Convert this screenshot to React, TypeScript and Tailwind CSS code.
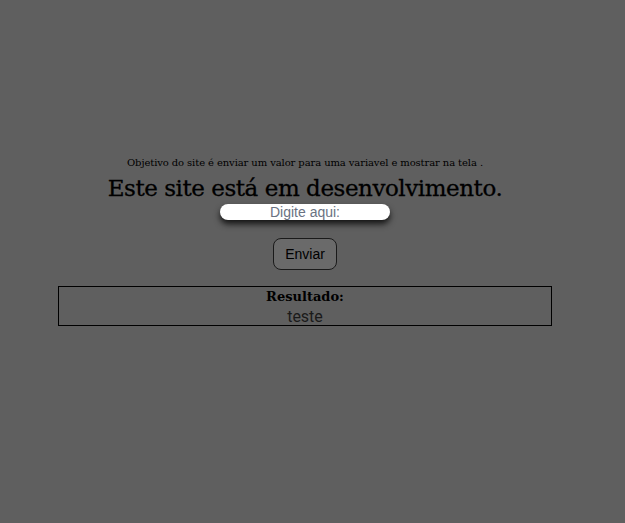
import { useState } from "react";

export default function App() {
  const [valor, setValor] = useState("");
  const [resultado, setResultado] = useState("teste");

  return (
    <div className="min-h-[523px] w-full bg-[#5f5f5f] pr-[15px] pt-[156px] text-black">
      <div className="flex flex-col items-center">
        <p className="font-['DejaVu_Serif',serif] text-[10px] leading-[14px] tracking-[-0.1px]">
          Objetivo do site é enviar um valor para uma variavel e mostrar na tela .
        </p>
        <h1 className="mt-[2px] font-['DejaVu_Serif',serif] text-[23px] leading-[32px] tracking-[-0.45px] [-webkit-text-stroke:0.3px_black]">
          Este site está em desenvolvimento.
        </h1>
        <input
          value={valor}
          onChange={(e) => setValor(e.target.value)}
          placeholder="Digite aqui:"
          className="h-[16px] w-[170px] rounded-full bg-white text-center font-['Liberation_Sans',sans-serif] text-[14px] text-gray-600 shadow-[0_4px_6px_rgba(0,0,0,0.8)] outline-none placeholder:text-gray-500"
        />
        <button
          onClick={() => setResultado(valor || "teste")}
          className="mt-[18px] h-[32px] w-[64px] rounded-lg border border-[#1a1a1a] bg-[#6a6a6a] font-['Liberation_Sans',sans-serif] text-[14px]"
        >
          Enviar
        </button>
        <div className="mt-[16px] flex h-[40px] w-[494px] flex-col items-center border border-black">
          <span className="mt-[1px] font-['DejaVu_Serif',serif] text-[13px] font-bold leading-[18px]">
            Resultado:
          </span>
          <span className="mt-[1px] font-['Roboto',sans-serif] text-[16px] leading-[20px] text-[#1a1a1a]">
            {resultado}
          </span>
        </div>
      </div>
    </div>
  );
}
